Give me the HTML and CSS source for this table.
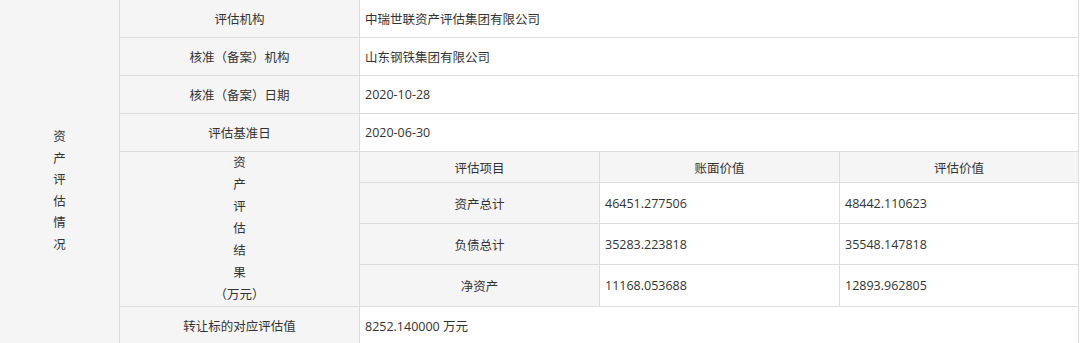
FILE: index.html
```html
<!DOCTYPE html>
<html lang="zh-CN">
<head>
<meta charset="utf-8">
<title>资产评估情况</title>
<link rel="stylesheet" href="styles.css">
</head>
<body>
<div class="sheet">
  <div class="side">资<br>产<br>评<br>估<br>情<br>况</div>

  <div class="label">评估机构</div>
  <div class="value">中瑞世联资产评估集团有限公司</div>

  <div class="label">核准（备案）机构</div>
  <div class="value">山东钢铁集团有限公司</div>

  <div class="label">核准（备案）日期</div>
  <div class="value">2020-10-28</div>

  <div class="label">评估基准日</div>
  <div class="value">2020-06-30</div>

  <div class="label label-stack">资<br>产<br>评<br>估<br>结<br>果<br>（万元）</div>
  <div class="nested">
    <div class="head">评估项目</div>
    <div class="head">账面价值</div>
    <div class="head">评估价值</div>

    <div class="item">资产总计</div>
    <div class="num">46451.277506</div>
    <div class="num">48442.110623</div>

    <div class="item">负债总计</div>
    <div class="num">35283.223818</div>
    <div class="num">35548.147818</div>

    <div class="item">净资产</div>
    <div class="num">11168.053688</div>
    <div class="num">12893.962805</div>
  </div>

  <div class="label">转让标的对应评估值</div>
  <div class="value">8252.140000 万元</div>
</div>
</body>
</html>
```

FILE: styles.css
```css
html, body {
  margin: 0;
  padding: 0;
  background: #ffffff;
}

body {
  font-family: "Open Sans", "Noto Sans CJK SC", sans-serif;
  font-size: 12.5px;
  color: #333333;
}

.sheet {
  width: 1079px;
  box-sizing: border-box;
  padding-right: 1px;
  display: grid;
  grid-template-columns: 119px 239px 718px;
  grid-template-rows: 37px 37px 37px 37px 154px 37px;
  gap: 1px;
  background: #dddddd;
}

.side {
  grid-column: 1;
  grid-row: 1 / span 6;
  background: #f5f5f5;
  text-align: center;
  line-height: 21.6px;
  padding-top: 126px;
  box-sizing: border-box;
}

.label {
  grid-column: 2;
  background: #f5f5f5;
  display: flex;
  align-items: center;
  justify-content: center;
  text-align: center;
}

.label-stack {
  line-height: 22px;
}

.value {
  grid-column: 3;
  background: #ffffff;
  display: flex;
  align-items: center;
  padding-left: 5px;
}

.nested {
  grid-column: 3;
  display: grid;
  grid-template-columns: 239px 239px 238px;
  grid-template-rows: 30px 40px 40px 41px;
  gap: 1px;
  background: #dddddd;
}

.head,
.item {
  background: #f5f5f5;
  display: flex;
  align-items: center;
  justify-content: center;
}

.num {
  background: #ffffff;
  display: flex;
  align-items: center;
  padding-left: 5px;
}
```
